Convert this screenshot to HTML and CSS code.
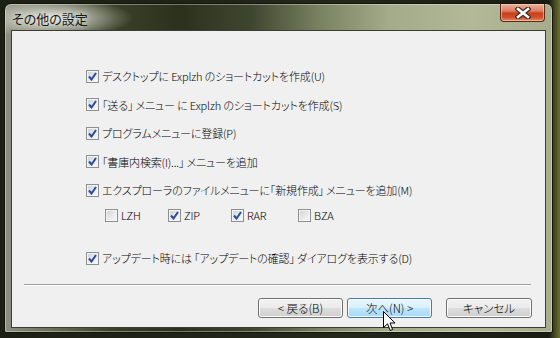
FILE: index.html
```html
<!DOCTYPE html>
<html lang="ja">
<head>
<meta charset="utf-8">
<title>その他の設定</title>
<link rel="stylesheet" href="styles.css">
</head>
<body>
<div class="desktop">
  <div class="window">
    <div class="titlebar">
      <span class="title">その他の設定</span>
      <span class="close">
        <svg width="16" height="12" viewBox="0 0 16 12">
          <path d="M3 2 L13 10 M13 2 L3 10" stroke="#3a2a20" stroke-width="5" stroke-linecap="square"/>
          <path d="M3 2 L13 10 M13 2 L3 10" stroke="#ffffff" stroke-width="2.6" stroke-linecap="square"/>
        </svg>
      </span>
    </div>
    <div class="client">
      <div class="options">
        <label class="row"><span class="cb on"><svg viewBox="0 0 9 9" width="9" height="9"><path d="M1 4.5 L3.5 7.5 L8 1" fill="none" stroke="#2a4a9a" stroke-width="2"/></svg></span><span>デスクトップに Explzh のショートカットを作成(U)</span></label>
        <label class="row"><span class="cb on"><svg viewBox="0 0 9 9" width="9" height="9"><path d="M1 4.5 L3.5 7.5 L8 1" fill="none" stroke="#2a4a9a" stroke-width="2"/></svg></span><span>「送る」 メニュー に Explzh のショートカットを作成(S)</span></label>
        <label class="row"><span class="cb on"><svg viewBox="0 0 9 9" width="9" height="9"><path d="M1 4.5 L3.5 7.5 L8 1" fill="none" stroke="#2a4a9a" stroke-width="2"/></svg></span><span>プログラムメニューに登録(P)</span></label>
        <label class="row"><span class="cb on"><svg viewBox="0 0 9 9" width="9" height="9"><path d="M1 4.5 L3.5 7.5 L8 1" fill="none" stroke="#2a4a9a" stroke-width="2"/></svg></span><span>「書庫内検索(I)...」 メニューを追加</span></label>
        <label class="row"><span class="cb on"><svg viewBox="0 0 9 9" width="9" height="9"><path d="M1 4.5 L3.5 7.5 L8 1" fill="none" stroke="#2a4a9a" stroke-width="2"/></svg></span><span>エクスプローラのファイルメニューに「新規作成」 メニューを追加(M)</span></label>
        <div class="subrow">
          <label class="row"><span class="cb"></span><span>LZH</span></label>
          <label class="row"><span class="cb on"><svg viewBox="0 0 9 9" width="9" height="9"><path d="M1 4.5 L3.5 7.5 L8 1" fill="none" stroke="#2a4a9a" stroke-width="2"/></svg></span><span>ZIP</span></label>
          <label class="row"><span class="cb on"><svg viewBox="0 0 9 9" width="9" height="9"><path d="M1 4.5 L3.5 7.5 L8 1" fill="none" stroke="#2a4a9a" stroke-width="2"/></svg></span><span>RAR</span></label>
          <label class="row"><span class="cb"></span><span>BZA</span></label>
        </div>
        <label class="row last"><span class="cb on"><svg viewBox="0 0 9 9" width="9" height="9"><path d="M1 4.5 L3.5 7.5 L8 1" fill="none" stroke="#2a4a9a" stroke-width="2"/></svg></span><span>アップデート時には 「アップデートの確認」 ダイアログを表示する(D)</span></label>
      </div>
      <div class="sep"></div>
      <div class="buttons">
        <button class="btn">&lt; 戻る(B)</button>
        <button class="btn hover">次へ(N) &gt;</button>
        <button class="btn cancel">キャンセル</button>
      </div>
    </div>
  </div>
  <svg class="cursor" width="13" height="21" viewBox="0 0 13 21">
    <path d="M0.5 0.5 L0.5 16.5 L4.5 12.8 L7.2 19.5 L9.6 18.5 L7 12 L12 12 Z" fill="#ffffff" stroke="#000000" stroke-width="1"/>
  </svg>
</div>
</body>
</html>
```
FILE: styles.css
```css
html, body {
  margin: 0;
  padding: 0;
}
body {
  width: 560px;
  height: 338px;
  overflow: hidden;
  background: linear-gradient(90deg, #1c1f14 0%, #23271a 60%, #1a1c12 98%, #6b7030 100%);
  font-family: "Noto Sans CJK JP", "Noto Sans", sans-serif;
  font-size: 11px;
  font-weight: 300;
  color: #000;
}
.desktop {
  position: relative;
  padding: 3px 7px 5px 4px;
}
.window {
  width: 549px;
  height: 330px;
  box-sizing: border-box;
  border: 1px solid #14160c;
  border-radius: 7px 7px 2px 2px;
  background:
    radial-gradient(ellipse 80px 20px at 48px 14px, rgba(240,240,232,0.9), rgba(240,240,232,0) 100%),
    linear-gradient(90deg, #8d8f80 0%, #6e725c 8%, #3a4028 20%, #2b311d 32%, #3f4630 45%, #7b8462 58%, #a3ab8a 70%, #b2b898 85%, #a6ac8c 100%);
  box-shadow: inset 0 0 0 1px rgba(255,255,255,0.35);
  padding: 0 6px 4px 6px;
  display: flex;
  flex-direction: column;
}
.titlebar {
  height: 26px;
  display: flex;
  justify-content: space-between;
  align-items: flex-start;
}
.title {
  margin-top: 5px;
  margin-left: 1px;
  font-size: 13px;
  font-weight: 400;
  font-feature-settings: "palt";
  color: #181818;
  text-shadow: 0 0 6px rgba(255,255,255,0.9);
}
.close {
  width: 45px;
  height: 18px;
  box-sizing: border-box;
  margin-right: 1px;
  border: 1px solid #5a2a1c;
  border-top: none;
  border-radius: 0 0 4px 4px;
  background: linear-gradient(180deg, #eab2a0 0%, #de7f62 40%, #c6401c 55%, #d2522c 80%, #e6906c 100%);
  box-shadow: inset 0 0 0 1px rgba(255,220,200,0.5);
  display: flex;
  align-items: center;
  justify-content: center;
}
.client {
  flex: 1;
  border: 1px solid #3a3d32;
  background: #f0f0f0;
  display: flex;
  flex-direction: column;
}
.options {
  display: flex;
  flex-direction: column;
  padding: 37px 0 0 74px;
  gap: 12.5px;
}
.row {
  display: flex;
  align-items: center;
  height: 16px;
  gap: 3px;
  font-feature-settings: "palt";
  letter-spacing: -0.15px;
  white-space: nowrap;
}
.subrow {
  display: grid;
  grid-template-columns: 63px 63px 67px auto;
  padding-left: 19px;
  margin-top: -3.5px;
}
.last {
  margin-top: 14.5px;
}
.cb {
  width: 13px;
  height: 13px;
  box-sizing: border-box;
  border: 1px solid #8e8f8f;
  background: linear-gradient(135deg, #cdd0d4 0%, #e6e7e9 50%, #fbfbfb 100%);
  box-shadow: inset 0 0 0 1px #f4f4f4;
  display: flex;
  align-items: center;
  justify-content: center;
  flex: none;
}
.sep {
  margin: 18px 14px 0 12px;
  border-top: 1px solid #a0a0a0;
  border-bottom: 1px solid #ffffff;
  height: 0;
}
.buttons {
  display: flex;
  justify-content: flex-end;
  margin: 12px 13px 0 0;
}
.btn {
  width: 85px;
  height: 20px;
  box-sizing: border-box;
  border: 1px solid #707070;
  border-radius: 3px;
  background: linear-gradient(180deg, #f2f2f2 0%, #ebebeb 48%, #dddddd 52%, #cfcfcf 100%);
  box-shadow: inset 0 0 0 1px #fcfcfc;
  font-family: "Noto Sans CJK JP", "Noto Sans", sans-serif;
  font-size: 11.5px;
  font-weight: 300;
  font-feature-settings: "palt";
  color: #000;
  padding: 0;
  line-height: 16px;
}
.btn.hover {
  margin-left: 4px;
  border-color: #3c7fb1;
  background: linear-gradient(180deg, #eaf6fd 0%, #d9f0fc 48%, #bee6fd 52%, #a7d9f5 100%);
}
.btn.cancel {
  width: 86px;
  margin-left: 14px;
}
.cursor {
  position: absolute;
  left: 383px;
  top: 311px;
}
```
